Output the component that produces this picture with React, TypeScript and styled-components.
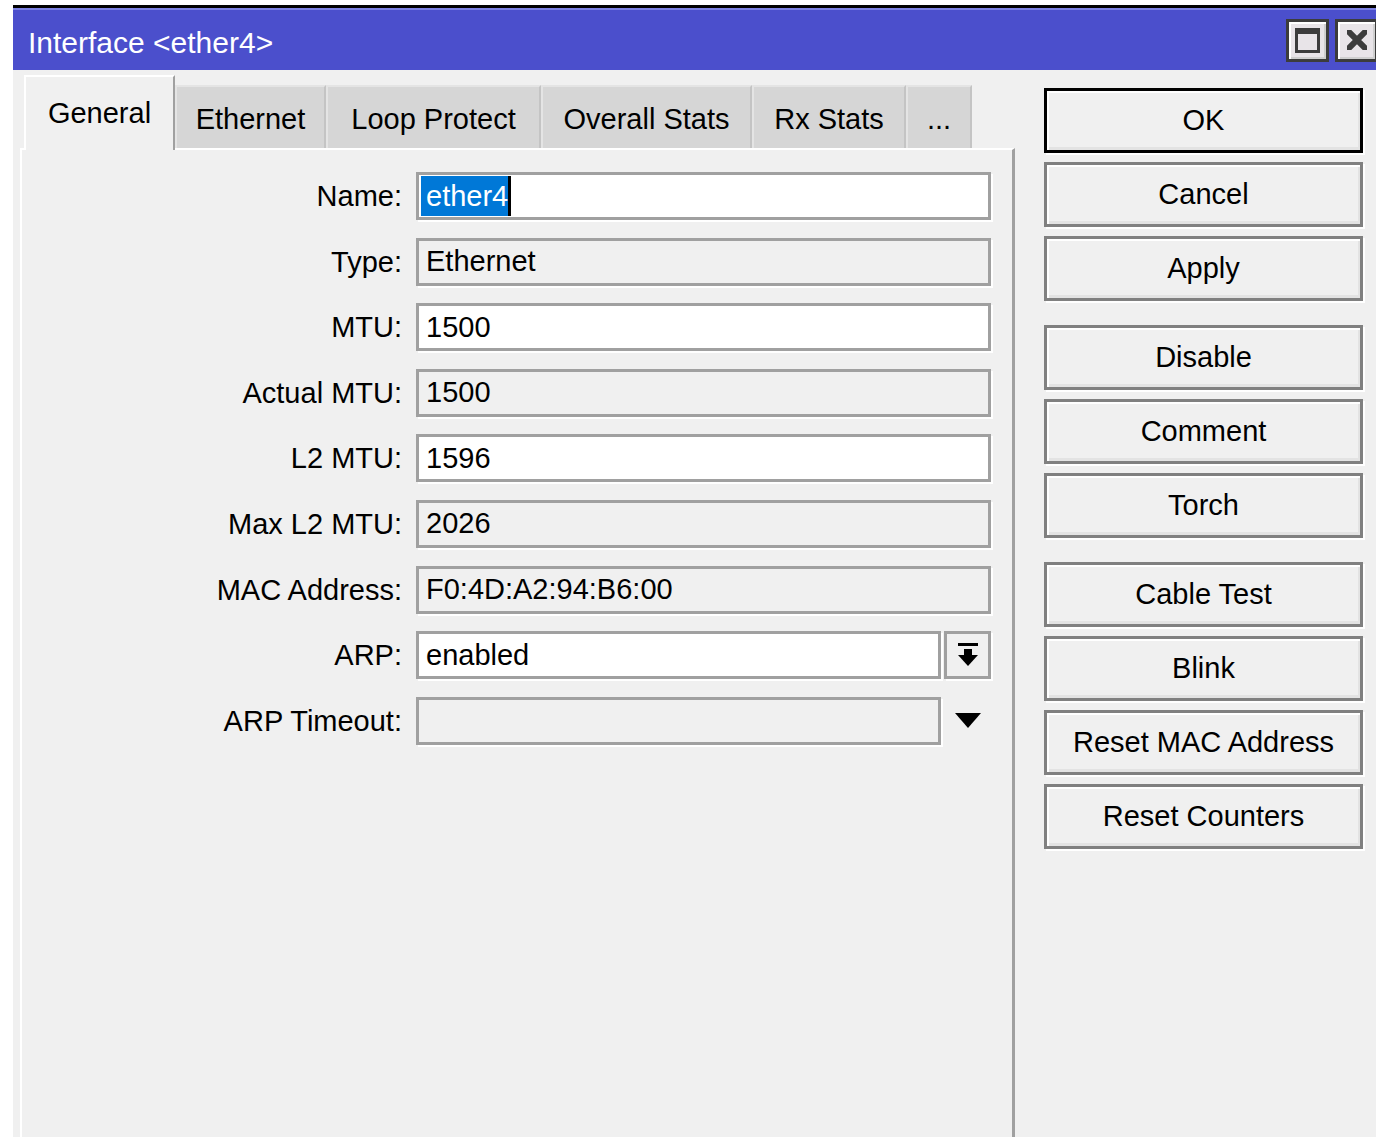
import React from 'react';
import styled, { createGlobalStyle } from 'styled-components';

const GlobalStyle = createGlobalStyle`
  html, body {
    margin: 0;
    padding: 0;
    background: #fff;
    overflow: hidden;
  }
  body {
    font-family: "Liberation Sans", Arial, sans-serif;
    color: #000;
    white-space: nowrap;
  }
`;

const Window = styled.div`
  margin: 5px 0 0 13px;
  width: 1365px;
  height: 1132px;
  display: flex;
  flex-direction: column;
  background: #f0f0f0;
  border-top: 3px solid #000;
`;

const TitleBar = styled.div`
  height: 60px;
  border-top: 2px solid #7c80e2;
  background: #4b4fcc;
  display: flex;
  align-items: center;
  padding-left: 15px;
  color: #fff;
  font-size: 30px;
`;

const Title = styled.div`
  flex: 1;
  padding-top: 6px;
`;

const TitleButton = styled.div`
  box-sizing: border-box;
  width: 43px;
  height: 43px;
  margin-left: 6px;
  border: 3px solid #3c3c3c;
  background: #e8e4e8;
  box-shadow: inset 2px 2px 0 #fff, inset -2px -2px 0 #cfcfcf;
  display: flex;
  align-items: center;
  justify-content: center;
`;

const Body = styled.div`
  flex: 1;
  display: flex;
`;

const LeftPane = styled.div`
  width: 995px;
  padding: 5px 0 0 7px;
  display: flex;
  flex-direction: column;
`;

const TabStrip = styled.div`
  display: flex;
  align-items: flex-end;
  padding-left: 4px;
  height: 73px;
`;

const Tab = styled.div<{ $active?: boolean; $width: number }>`
  box-sizing: border-box;
  width: ${p => p.$width}px;
  height: ${p => (p.$active ? 75 : 63)}px;
  padding-top: ${p => (p.$active ? 0 : 3)}px;
  margin-bottom: ${p => (p.$active ? -2 : 0)}px;
  display: flex;
  align-items: center;
  justify-content: center;
  font-size: 29px;
  background: ${p => (p.$active ? '#f0f0f0' : '#d6d6d6')};
  border-top: 2px solid ${p => (p.$active ? '#fff' : '#e4e4e4')};
  border-left: 2px solid ${p => (p.$active ? '#fff' : '#e4e4e4')};
  border-right: 2px solid ${p => (p.$active ? '#a0a0a0' : '#c4c4c4')};
  position: relative;
  z-index: 1;
`;

const Panel = styled.div`
  flex: 1;
  border-top: 2px solid #fff;
  border-left: 2px solid #fff;
  border-right: 3px solid #a0a0a0;
  padding-top: 22px;
`;

const Form = styled.div`
  display: grid;
  grid-template-columns: 380px 575px;
  column-gap: 14px;
  row-gap: 17.6px;
`;

const Label = styled.div`
  height: 48px;
  line-height: 48px;
  text-align: right;
  font-size: 29px;
`;

const FieldRow = styled.div`
  display: flex;
  gap: 3px;
`;

const Field = styled.div<{ $editable?: boolean }>`
  box-sizing: border-box;
  flex: 1;
  height: 48px;
  border: 3px solid #a0a0a0;
  box-shadow: 2px 2px 0 #fff;
  background: ${p => (p.$editable ? '#fff' : '#f0f0f0')};
  padding-left: 7px;
  display: flex;
  align-items: center;
  font-size: 29px;
`;

const Selected = styled.span`
  background: #0078d7;
  color: #fff;
  margin-left: -5px;
  padding-left: 5px;
  height: 40px;
  line-height: 40px;
`;

const Caret = styled.span`
  width: 3px;
  height: 40px;
  background: #000;
`;

const DropButton = styled.div<{ $framed?: boolean }>`
  box-sizing: border-box;
  width: 47px;
  height: 48px;
  border: 3px solid ${p => (p.$framed ? '#a0a0a0' : 'transparent')};
  box-shadow: ${p => (p.$framed ? '2px 2px 0 #fff' : 'none')};
  display: flex;
  align-items: center;
  justify-content: center;
`;

const RightPane = styled.div`
  flex: 1;
  padding: 18px 0 0 29px;
  display: flex;
  flex-direction: column;
  gap: 24px;
`;

const ButtonGroup = styled.div`
  display: flex;
  flex-direction: column;
  gap: 9px;
`;

const Button = styled.div<{ $default?: boolean }>`
  box-sizing: border-box;
  width: 319px;
  height: 65px;
  border: 3px solid ${p => (p.$default ? '#000' : '#808080')};
  background: #f0f0f0;
  box-shadow: inset 2px 2px 0 #fff, inset -2px -3px 0 #e3e3e3, 2px 2px 0 #fff;
  display: flex;
  align-items: center;
  justify-content: center;
  font-size: 29px;
`;

const fields = [
  { label: 'Type:', value: 'Ethernet' },
  { label: 'MTU:', value: '1500', editable: true },
  { label: 'Actual MTU:', value: '1500' },
  { label: 'L2 MTU:', value: '1596', editable: true },
  { label: 'Max L2 MTU:', value: '2026' },
  { label: 'MAC Address:', value: 'F0:4D:A2:94:B6:00' },
];

const tabs = [
  { name: 'Ethernet', width: 151 },
  { name: 'Loop Protect', width: 215 },
  { name: 'Overall Stats', width: 211 },
  { name: 'Rx Stats', width: 154 },
  { name: '...', width: 66 },
];

const buttonGroups = [
  ['OK', 'Cancel', 'Apply'],
  ['Disable', 'Comment', 'Torch'],
  ['Cable Test', 'Blink', 'Reset MAC Address', 'Reset Counters'],
];

const MaximizeIcon = () => (
  <svg width="25" height="25" viewBox="0 0 25 25">
    <rect x="1.5" y="1.5" width="22" height="22" fill="none" stroke="#3c3c3c" strokeWidth="3" />
    <rect x="0" y="0" width="25" height="6" fill="#3c3c3c" />
  </svg>
);

const CloseIcon = () => (
  <svg width="20" height="20" viewBox="0 0 20 20">
    <path d="M2 2 L18 18 M18 2 L2 18" stroke="#3c3c3c" strokeWidth="6" strokeLinecap="square" />
  </svg>
);

const ExpandIcon = () => (
  <svg width="20" height="24" viewBox="0 0 20 24">
    <rect x="0" y="0" width="20" height="3" fill="#000" />
    <rect x="6" y="6" width="8" height="6" fill="#000" />
    <polygon points="0,12 20,12 10,23" fill="#000" />
  </svg>
);

const DownIcon = () => (
  <svg width="26" height="15" viewBox="0 0 26 15">
    <polygon points="0,0 26,0 13,15" fill="#000" />
  </svg>
);

export default function App() {
  return (
    <>
      <GlobalStyle />
      <Window>
        <TitleBar>
          <Title>Interface &lt;ether4&gt;</Title>
          <TitleButton><MaximizeIcon /></TitleButton>
          <TitleButton><CloseIcon /></TitleButton>
        </TitleBar>
        <Body>
          <LeftPane>
            <TabStrip>
              <Tab $active $width={151}>General</Tab>
              {tabs.map(t => <Tab key={t.name} $width={t.width}>{t.name}</Tab>)}
            </TabStrip>
            <Panel>
              <Form>
                <Label>Name:</Label>
                <Field $editable>
                  <Selected>ether4</Selected>
                  <Caret />
                </Field>
                {fields.map(f => (
                  <React.Fragment key={f.label}>
                    <Label>{f.label}</Label>
                    <Field $editable={f.editable}>{f.value}</Field>
                  </React.Fragment>
                ))}
                <Label>ARP:</Label>
                <FieldRow>
                  <Field $editable>enabled</Field>
                  <DropButton $framed><ExpandIcon /></DropButton>
                </FieldRow>
                <Label>ARP Timeout:</Label>
                <FieldRow>
                  <Field />
                  <DropButton><DownIcon /></DropButton>
                </FieldRow>
              </Form>
            </Panel>
          </LeftPane>
          <RightPane>
            {buttonGroups.map((group, i) => (
              <ButtonGroup key={i}>
                {group.map(b => (
                  <Button key={b} $default={b === 'OK'}>{b}</Button>
                ))}
              </ButtonGroup>
            ))}
          </RightPane>
        </Body>
      </Window>
    </>
  );
}
